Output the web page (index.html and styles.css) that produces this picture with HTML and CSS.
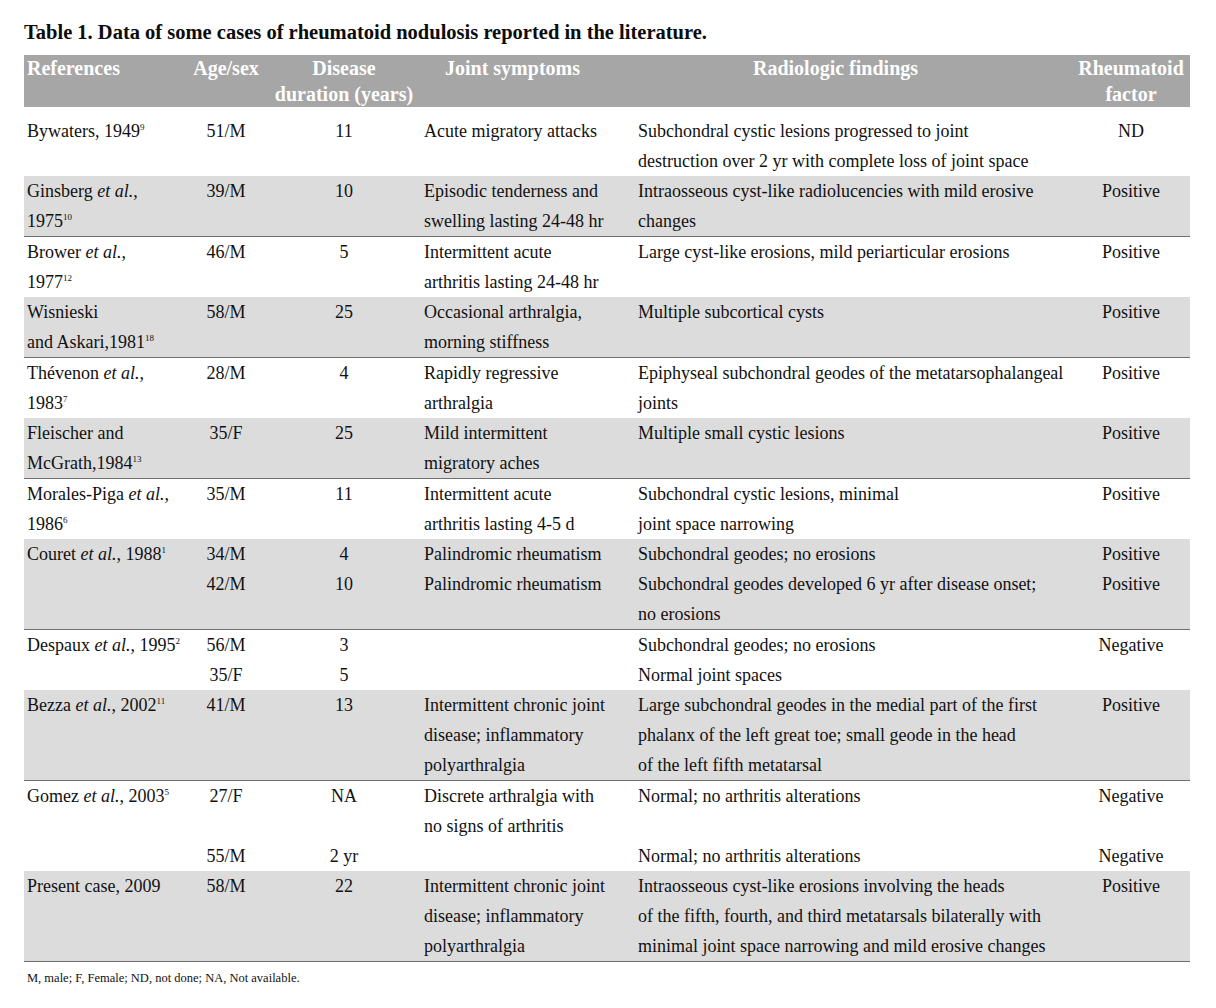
FILE: index.html
```html
<!DOCTYPE html>
<html lang="en">
<head>
<meta charset="utf-8">
<title>Table 1</title>
<link rel="stylesheet" href="styles.css">
</head>
<body>
<div class="page">
  <h1 class="caption">Table 1. Data of some cases of rheumatoid nodulosis reported in the literature.</h1>
  <table class="data">
    <colgroup>
      <col class="c-ref"><col class="c-age"><col class="c-dur"><col class="c-joint"><col class="c-rad"><col class="c-rf">
    </colgroup>
    <thead>
      <tr>
        <th class="h-ref">References</th>
        <th class="h-center">Age/sex</th>
        <th class="h-center h-dur">Disease<br>duration (years)</th>
        <th class="h-joint">Joint symptoms</th>
        <th class="h-rad">Radiologic findings</th>
        <th class="h-center">Rheumatoid<br>factor</th>
      </tr>
    </thead>
    <tbody>
      <tr class="first">
        <td>Bywaters, 1949<sup>9</sup></td><td class="ctr">51/M</td><td class="ctr">11</td>
        <td>Acute migratory attacks</td>
        <td>Subchondral cystic lesions progressed to joint<br>destruction over 2 yr with complete loss of joint space</td>
        <td class="ctr">ND</td>
      </tr>
      <tr class="shade rule">
        <td>Ginsberg <i>et al.</i>,<br>1975<sup>10</sup></td><td class="ctr">39/M</td><td class="ctr">10</td>
        <td>Episodic tenderness and<br>swelling lasting 24-48 hr</td>
        <td>Intraosseous cyst-like radiolucencies with mild erosive<br>changes</td>
        <td class="ctr">Positive</td>
      </tr>
      <tr>
        <td>Brower <i>et al.</i>,<br>1977<sup>12</sup></td><td class="ctr">46/M</td><td class="ctr">5</td>
        <td>Intermittent acute<br>arthritis lasting 24-48 hr</td>
        <td>Large cyst-like erosions, mild periarticular erosions</td>
        <td class="ctr">Positive</td>
      </tr>
      <tr class="shade rule">
        <td>Wisnieski<br>and Askari,1981<sup>18</sup></td><td class="ctr">58/M</td><td class="ctr">25</td>
        <td>Occasional arthralgia,<br>morning stiffness</td>
        <td>Multiple subcortical cysts</td>
        <td class="ctr">Positive</td>
      </tr>
      <tr>
        <td>Thévenon <i>et al.</i>,<br>1983<sup>7</sup></td><td class="ctr">28/M</td><td class="ctr">4</td>
        <td>Rapidly regressive<br>arthralgia</td>
        <td>Epiphyseal subchondral geodes of the metatarsophalangeal<br>joints</td>
        <td class="ctr">Positive</td>
      </tr>
      <tr class="shade rule">
        <td>Fleischer and<br>McGrath,1984<sup>13</sup></td><td class="ctr">35/F</td><td class="ctr">25</td>
        <td>Mild intermittent<br>migratory aches</td>
        <td>Multiple small cystic lesions</td>
        <td class="ctr">Positive</td>
      </tr>
      <tr>
        <td>Morales-Piga <i>et al.</i>,<br>1986<sup>6</sup></td><td class="ctr">35/M</td><td class="ctr">11</td>
        <td>Intermittent acute<br>arthritis lasting 4-5 d</td>
        <td>Subchondral cystic lesions, minimal<br>joint space narrowing</td>
        <td class="ctr">Positive</td>
      </tr>
      <tr class="shade">
        <td>Couret <i>et al.</i>, 1988<sup>1</sup></td><td class="ctr">34/M</td><td class="ctr">4</td>
        <td>Palindromic rheumatism</td>
        <td>Subchondral geodes; no erosions</td>
        <td class="ctr">Positive</td>
      </tr>
      <tr class="shade rule">
        <td></td><td class="ctr">42/M</td><td class="ctr">10</td>
        <td>Palindromic rheumatism</td>
        <td>Subchondral geodes developed 6 yr after disease onset;<br>no erosions</td>
        <td class="ctr">Positive</td>
      </tr>
      <tr>
        <td>Despaux <i>et al.</i>, 1995<sup>2</sup></td><td class="ctr">56/M</td><td class="ctr">3</td>
        <td></td>
        <td>Subchondral geodes; no erosions</td>
        <td class="ctr">Negative</td>
      </tr>
      <tr>
        <td></td><td class="ctr">35/F</td><td class="ctr">5</td>
        <td></td>
        <td>Normal joint spaces</td>
        <td></td>
      </tr>
      <tr class="shade rule">
        <td>Bezza <i>et al.</i>, 2002<sup>11</sup></td><td class="ctr">41/M</td><td class="ctr">13</td>
        <td>Intermittent chronic joint<br>disease; inflammatory<br>polyarthralgia</td>
        <td>Large subchondral geodes in the medial part of the first<br>phalanx of the left great toe; small geode in the head<br>of the left fifth metatarsal</td>
        <td class="ctr">Positive</td>
      </tr>
      <tr>
        <td>Gomez <i>et al.</i>, 2003<sup>5</sup></td><td class="ctr">27/F</td><td class="ctr">NA</td>
        <td>Discrete arthralgia with<br>no signs of arthritis</td>
        <td>Normal; no arthritis alterations</td>
        <td class="ctr">Negative</td>
      </tr>
      <tr>
        <td></td><td class="ctr">55/M</td><td class="ctr">2 yr</td>
        <td></td>
        <td>Normal; no arthritis alterations</td>
        <td class="ctr">Negative</td>
      </tr>
      <tr class="shade rule">
        <td>Present case, 2009</td><td class="ctr">58/M</td><td class="ctr">22</td>
        <td>Intermittent chronic joint<br>disease; inflammatory<br>polyarthralgia</td>
        <td>Intraosseous cyst-like erosions involving the heads<br>of the fifth, fourth, and third metatarsals bilaterally with<br>minimal joint space narrowing and mild erosive changes</td>
        <td class="ctr">Positive</td>
      </tr>
    </tbody>
  </table>
  <p class="note">M, male; F, Female; ND, not done; NA, Not available.</p>
</div>
</body>
</html>
```

FILE: styles.css
```css
html, body {
  margin: 0;
  padding: 0;
  background: #ffffff;
}

.page {
  padding: 20px 26px 0 24px;
  font-family: "Liberation Serif", "Times New Roman", serif;
  color: #111111;
}

.caption {
  margin: 0 0 11px 0;
  font-size: 20.5px;
  line-height: 24px;
  font-weight: bold;
  color: #0c0c0c;
}

.data {
  width: 1166px;
  border-collapse: collapse;
  table-layout: fixed;
}

.c-ref { width: 164px; }
.c-age { width: 76px; }
.c-dur { width: 160px; }
.c-joint { width: 210px; }
.c-rad { width: 438px; }
.c-rf { width: 118px; }

.data th {
  background: #a6a6a6;
  color: #ffffff;
  font-size: 20px;
  line-height: 26px;
  font-weight: bold;
  vertical-align: top;
  padding: 0;
  white-space: nowrap;
  text-align: left;
}

.data th.h-ref { padding-left: 3px; }
.data th.h-center { text-align: center; }
.data th.h-joint { padding-left: 21px; }
.data th.h-rad { padding-left: 119px; }

.data td {
  font-size: 18px;
  line-height: 30px;
  vertical-align: top;
  padding: 0 0 0 3px;
  white-space: nowrap;
  overflow: visible;
}

.data td:nth-child(4) { padding-left: 0; }
.data td:nth-child(5) { padding-left: 4px; }

.data td.ctr {
  text-align: center;
  padding-left: 0;
}

.data tr.first td { padding-top: 9px; }

.data tr.shade { background: #dcdcdc; }

.data tr.rule td { border-bottom: 1px solid #6e6e6e; }

.data sup {
  font-size: 9px;
  line-height: 0;
  vertical-align: 7px;
}

.note {
  margin: 8px 0 0 3px;
  font-size: 12.5px;
  line-height: 16px;
}
```
